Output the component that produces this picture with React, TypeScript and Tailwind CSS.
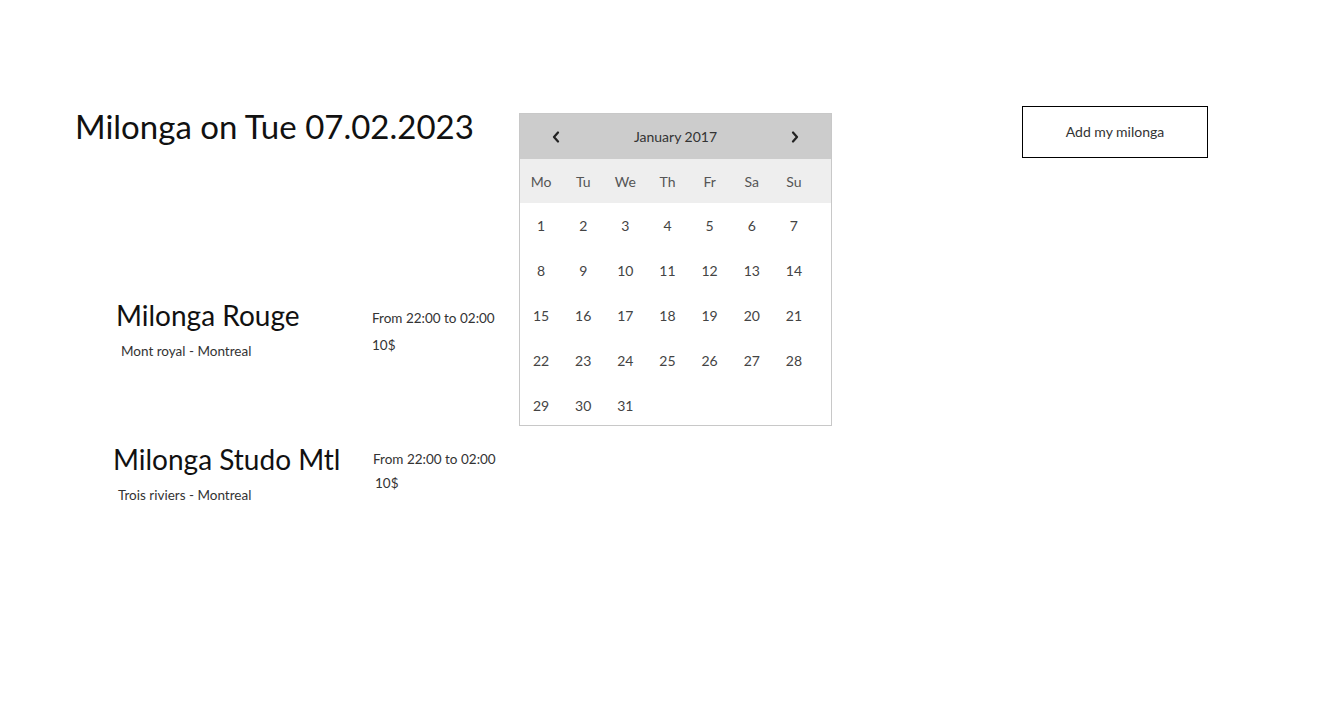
import React from "react";

const days = Array.from({ length: 31 }, (_, i) => i + 1);
const weekdays = ["Mo", "Tu", "We", "Th", "Fr", "Sa", "Su"];

function Chevron({ dir }: { dir: "left" | "right" }) {
  return (
    <svg width="8" height="12" viewBox="0 0 8 12" className="block">
      <path
        d={dir === "left" ? "M6 1.5 L2 6 L6 10.5" : "M2 1.5 L6 6 L2 10.5"}
        fill="none"
        stroke="#222"
        strokeWidth="2.2"
        strokeLinecap="round"
        strokeLinejoin="round"
      />
    </svg>
  );
}

export default function App() {
  return (
    <div className="min-h-screen bg-white font-['Lato','Noto_Sans',sans-serif] text-[#222]">
      <div className="flex items-start pt-[106px]">
        <div className="ml-[75px] w-[444px]">
          <h1 className="text-[33px] leading-[40px] text-[#111] font-normal">Milonga on Tue 07.02.2023</h1>
          <div className="mt-[152px] flex flex-col">
            <div className="flex items-start ml-[41px]">
              <div className="w-[256px]">
                <div className="text-[28px] leading-[34px] text-[#111]">Milonga Rouge</div>
                <div className="ml-[5px] mt-[9px] text-[13.5px] leading-[20px] text-[#333]">Mont royal - Montreal</div>
              </div>
              <div className="text-[13.5px] text-[#333]">
                <div className="leading-[20px] mt-[10px]">From 22:00 to 02:00</div>
                <div className="leading-[20px] mt-[7px]">10$</div>
              </div>
            </div>
            <div className="flex items-start ml-[38px] mt-[81px]">
              <div className="w-[260px]">
                <div className="text-[28px] leading-[34px] text-[#111]">Milonga Studo Mtl</div>
                <div className="ml-[5px] mt-[9px] text-[13.5px] leading-[20px] text-[#333]">Trois riviers - Montreal</div>
              </div>
              <div className="text-[13.5px] text-[#333]">
                <div className="leading-[20px] mt-[7px]">From 22:00 to 02:00</div>
                <div className="leading-[20px] mt-[4px] ml-[2px]">10$</div>
              </div>
            </div>
          </div>
        </div>
        <div className="mt-[7px] w-[313px] h-[313px] overflow-hidden border border-[#c8c8c8] bg-white">
          <div className="h-[45px] bg-[#cccccc] flex items-center text-[14px] text-[#333]">
            <div className="w-[42px] pl-[32px] flex justify-start"><Chevron dir="left" /></div>
            <div className="flex-1 text-center">January 2017</div>
            <div className="w-[42px] flex justify-start pl-[2px]"><Chevron dir="right" /></div>
          </div>
          <div className="h-[44px] bg-[#eeeeee]">
            <div className="h-full grid grid-cols-7 w-[295px] items-center text-[14px] text-[#555]">
              {weekdays.map((w) => (
                <div key={w} className="text-center">{w}</div>
              ))}
            </div>
          </div>
          <div className="grid grid-cols-7 w-[295px] auto-rows-[45px] items-center text-[14px] text-[#444]">
            {days.map((d) => (
              <div key={d} className="text-center -mt-[1px]">{d}</div>
            ))}
          </div>
        </div>
        <button className="ml-[190px] w-[186px] h-[52px] pb-[2px] border border-black bg-white text-[14px] text-[#333]">
          Add my milonga
        </button>
      </div>
    </div>
  );
}
